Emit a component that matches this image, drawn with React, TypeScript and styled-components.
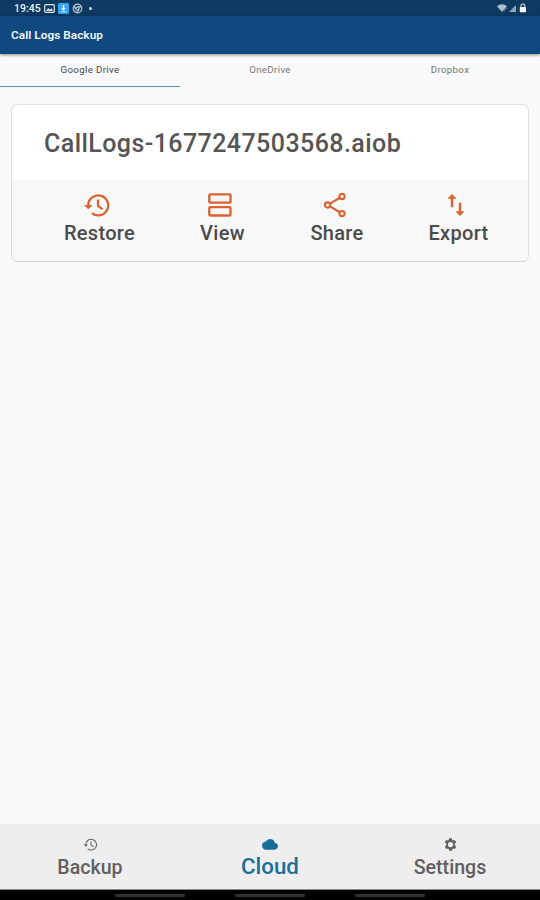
import React from "react";
import styled, { createGlobalStyle } from "styled-components";

const GlobalStyle = createGlobalStyle`
  * { box-sizing: border-box; }
  body { margin: 0; background: #f9f9f9; font-family: Roboto, sans-serif; }
`;

const Screen = styled.div`
  width: 540px;
  height: 900px;
  display: flex;
  flex-direction: column;
  overflow: hidden;
  background: #f9f9f9;
`;

const StatusBar = styled.header`
  flex: 0 0 16px;
  display: flex;
  align-items: center;
  justify-content: space-between;
  padding: 1px 13px 0 14px;
  background: #0e3a62;
  color: #eef3f7;
`;

const StatusGroup = styled.div<{ $gap: number }>`
  display: flex;
  align-items: center;
  gap: ${(p) => p.$gap}px;
`;

const Clock = styled.span`
  width: 27px;
  font-size: 10.5px;
  font-weight: 500;
  line-height: 14px;
  white-space: nowrap;
`;

const TitleBar = styled.div`
  flex: 0 0 38px;
  display: flex;
  align-items: center;
  padding-left: 11px;
  background: #10497f;
  color: #f0f4f8;
  font-size: 11.8px;
  font-weight: 600;
  letter-spacing: 0.04px;
  box-shadow: 0 1px 3px rgba(0, 0, 0, 0.45);
  z-index: 1;
`;

const Tabs = styled.nav`
  flex: 0 0 33px;
  display: grid;
  grid-template-columns: repeat(3, 180px);
`;

const Tab = styled.div<{ $active?: boolean }>`
  display: flex;
  justify-content: center;
  padding-top: 9px;
  border-bottom: 1.5px solid ${(p) => (p.$active ? "#4f95be" : "transparent")};
  color: ${(p) => (p.$active ? "#484848" : "#777")};
  font-size: 9.7px;
  line-height: 14px;
  letter-spacing: 0.35px;
`;

const Content = styled.main`
  flex: 1;
  padding: 17px 11px 0;
`;

const Card = styled.article`
  height: 158px;
  border: 1px solid #dfdfdf;
  border-radius: 7px;
  border-bottom-color: #d2d2d2;
  overflow: hidden;
  background: #f8f8f8;
`;

const FileName = styled.h1`
  height: 75px;
  margin: 0;
  padding: 1px 0 0 32px;
  background: #fff;
  color: #555;
  font-size: 25px;
  font-weight: 500;
  line-height: 75px;
  letter-spacing: 0.43px;
`;

const Actions = styled.div`
  display: flex;
  gap: 65px;
  padding: 11px 0 0 52px;
`;

const Action = styled.div<{ $width: number }>`
  width: ${(p) => p.$width}px;
  display: flex;
  flex-direction: column;
  align-items: center;
  color: #4b4b4b;
  font-size: 20px;
  font-weight: 500;
  line-height: 29px;
  letter-spacing: 0.3px;
  white-space: nowrap;
  svg { margin-right: 5px; color: #d96230; }
  &:last-child { margin-left: -1px; }
`;

const BottomNav = styled.nav`
  flex: 0 0 66px;
  display: grid;
  grid-template-columns: repeat(3, 180px);
  background: #eee;
  border-bottom: 1px solid #888;
`;

const NavItem = styled.div<{ $active?: boolean }>`
  display: flex;
  flex-direction: column;
  align-items: center;
  padding-top: 13px;
  color: ${(p) => (p.$active ? "#176f99" : "#606060")};
  font-size: ${(p) => (p.$active ? 22.3 : 19.6)}px;
  font-weight: 500;
  line-height: ${(p) => (p.$active ? 30 : 32)}px;
`;

const SystemBar = styled.footer`
  flex: 0 0 10px;
  display: flex;
  justify-content: center;
  gap: 50px;
  padding-top: 4px;
  background: #000;
`;

const SystemHandle = styled.i`
  width: 70px;
  height: 3px;
  border-radius: 1px;
  background: #303030;
`;

const HistoryIcon = ({ width, height, thin }: { width: number; height: number; thin?: boolean }) => (
  <svg width={width} height={height} viewBox="0 0 28 28" fill="none" stroke="currentColor" strokeWidth={thin ? 2 : 2.2}>
    <path d="M5.2 14.5a10 10 0 1 1 3.7 7.6M15 8.5V15l4.5 3.1" />
    <path d="M1 14h8.5l-4.3 4.2z" fill="currentColor" stroke="none" />
  </svg>
);

const ViewIcon = () => (
  <svg width="28" height="28" viewBox="0 0 28 28" fill="none" stroke="currentColor" strokeWidth="2.3">
    <rect x="3.3" y="3.3" width="21.2" height="8.4" rx="1" />
    <rect x="3.3" y="16.1" width="21.2" height="8.4" rx="1" />
  </svg>
);

const ShareIcon = () => (
  <svg width="28" height="28" viewBox="0 0 28 28" fill="none" stroke="currentColor" strokeWidth="2.1">
    <path d="m9 12.6 9.4-5.6M9 15.4l9.4 5.6" />
    <circle cx="6.5" cy="14" r="2.6" />
    <circle cx="21" cy="5.4" r="2.6" />
    <circle cx="21" cy="22.6" r="2.6" />
  </svg>
);

const ExportIcon = () => (
  <svg width="28" height="28" viewBox="0 0 28 28" fill="currentColor">
    <path d="M10 3 5.4 7.8h3.4v8.4h2.4V7.8h3.4zM18 25l-4.6-4.8h3.4v-8.4h2.4v8.4h3.4z" />
  </svg>
);

const CloudIcon = () => (
  <svg width="16" height="14" viewBox="0 1 24 21" fill="currentColor">
    <path d="M19.35 10.04A7.49 7.49 0 0 0 12 4a7.5 7.5 0 0 0-6.65 4.04A5.994 5.994 0 0 0 0 14c0 3.31 2.69 6 6 6h13c2.76 0 5-2.24 5-5 0-2.64-2.05-4.78-4.65-4.96z" />
  </svg>
);

const GearIcon = () => (
  <svg width="15" height="15" viewBox="0 0 24 24" fill="currentColor" fillRule="evenodd">
    <path d="m9.8 2-.5 2.7-1.6.9-2.6-.9-2.2 3.8L5 10.3v3.4l-2.1 1.8 2.2 3.8 2.6-.9 1.6.9.5 2.7h4.4l.5-2.7 1.6-.9 2.6.9 2.2-3.8-2.1-1.8v-3.4l2.1-1.8-2.2-3.8-2.6.9-1.6-.9-.5-2.7zM12 7.8a4.2 4.2 0 1 1 0 8.4 4.2 4.2 0 0 1 0-8.4z" />
  </svg>
);

const PictureIcon = () => (
  <svg width="11" height="9" viewBox="0 0 11 9">
    <rect x=".7" y=".7" width="9.6" height="7.6" rx="1" fill="none" stroke="#dce5ed" strokeWidth="1.2" />
    <path d="m2 7 2.2-3 1.6 1.8L7.3 4 9 7z" fill="#dce5ed" />
  </svg>
);

const DownloadIcon = () => (
  <svg width="11" height="11" viewBox="0 0 11 11">
    <rect width="11" height="11" rx="1.5" fill="#35a4f4" />
    <path d="M4.7 2h1.6v3H8L5.5 7.7 3 5h1.7zM3 8.2h5v1H3z" fill="#d9f0ff" />
  </svg>
);

const GlobeIcon = () => (
  <svg width="11" height="11" viewBox="0 0 11 11" fill="none" stroke="#b5c6d5" strokeWidth="1.2">
    <circle cx="5.5" cy="5.5" r="4.3" />
    <circle cx="5.5" cy="5.5" r="1.7" />
    <path d="M5.5 3.8h4M4 6.4 2 3M7 6.4 5 9.5" />
  </svg>
);

const Dot = styled.i`
  width: 3px;
  height: 3px;
  margin-left: 3px;
  border-radius: 50%;
  background: #d7e0e8;
`;

const SignalIcons = () => (
  <svg width="31" height="11" viewBox="0 0 31 11">
    <path d="M1 3.2Q6-.8 11 3.2L6 9z" fill="#adc0cd" />
    <path d="m8 8 3-3" stroke="#6f8ba1" />
    <path d="M20 2v7h-7z" fill="#8fa6b8" />
    <path d="M25 5V3a1.9 1.9 0 0 1 3.8 0v2" fill="none" stroke="#b8c8d5" strokeWidth="1.2" />
    <rect x="23.8" y="4" width="6.2" height="5.3" rx=".6" fill="#f3f6f9" />
  </svg>
);

export default function App() {
  return (
    <>
      <GlobalStyle />
      <Screen>
        <StatusBar>
          <StatusGroup $gap={3}>
            <Clock>19:45</Clock>
            <PictureIcon />
            <DownloadIcon />
            <GlobeIcon />
            <Dot />
          </StatusGroup>
          <SignalIcons />
        </StatusBar>
        <TitleBar>Call Logs Backup</TitleBar>
        <Tabs>
          <Tab $active>Google Drive</Tab>
          <Tab>OneDrive</Tab>
          <Tab>Dropbox</Tab>
        </Tabs>
        <Content>
          <Card>
            <FileName>CallLogs-1677247503568.aiob</FileName>
            <Actions>
              <Action $width={71}><HistoryIcon width={28} height={28} />Restore</Action>
              <Action $width={45}><ViewIcon />View</Action>
              <Action $width={54}><ShareIcon />Share</Action>
              <Action $width={61}><ExportIcon />Export</Action>
            </Actions>
          </Card>
        </Content>
        <BottomNav>
          <NavItem><HistoryIcon width={15} height={15} thin />Backup</NavItem>
          <NavItem $active><CloudIcon />Cloud</NavItem>
          <NavItem><GearIcon />Settings</NavItem>
        </BottomNav>
        <SystemBar>
          <SystemHandle />
          <SystemHandle />
          <SystemHandle />
        </SystemBar>
      </Screen>
    </>
  );
}
